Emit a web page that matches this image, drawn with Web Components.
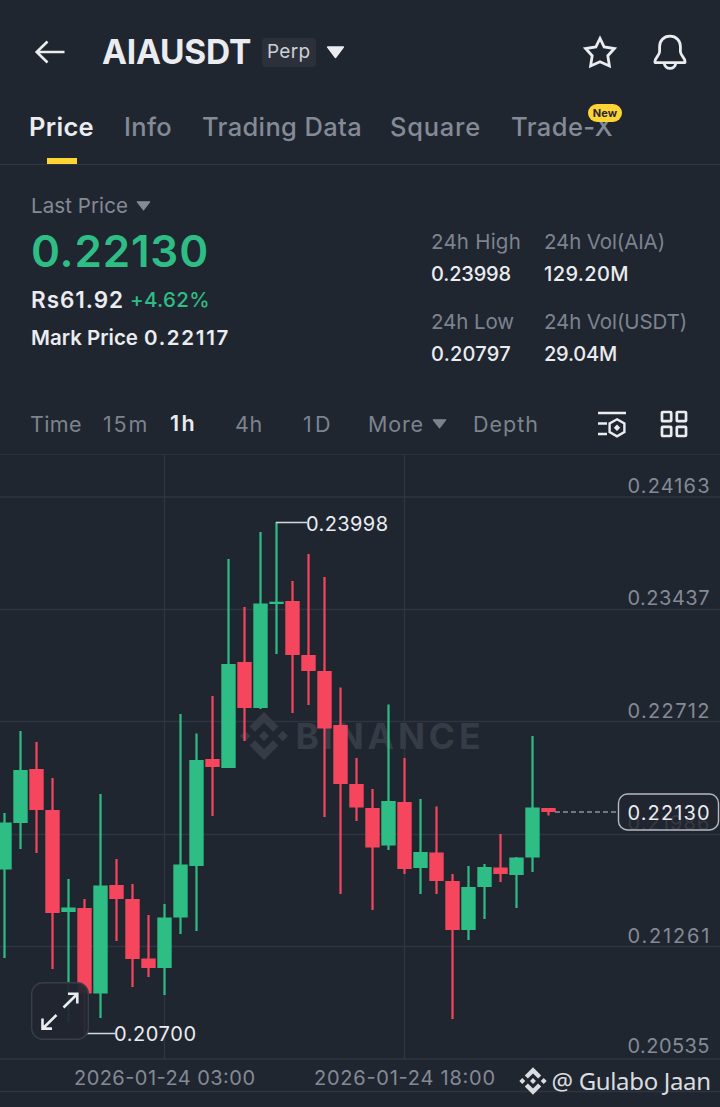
<!DOCTYPE html>
<html lang="en">
<head>
<meta charset="utf-8">
<title>AIAUSDT Perp</title>
<style>
  html, body { margin: 0; background: #202630; }
  body { width: 720px; height: 1107px; overflow: hidden; font-family: Inter, "Noto Sans", sans-serif; color: #eaecef; }
</style>
</head>
<body>
<trade-screen></trade-screen>

<script>
const GREEN = '#2ebd85';
const RED = '#f6465d';
const LOGO = 'M0-24 14.4-9.6 9-4.2 0-13.2-9-4.2-14.4-9.6Z M0 24 14.4 9.6 9 4.2 0 13.2-9 4.2-14.4 9.6Z M0-5.2 5.2 0 0 5.2-5.2 0Z M-18.8-5.2-13.6 0-18.8 5.2-24 0Z M18.8-5.2 24 0 18.8 5.2 13.6 0Z';

// One line of text, tracked so that it fills the given width
class FitText extends HTMLElement {
  constructor() {
    super();
    this.attachShadow({ mode: 'open' });
  }

  connectedCallback() {
    const w = Number(this.getAttribute('w'));
    const size = this.getAttribute('size') || 20.5;
    const weight = this.getAttribute('weight') || 400;
    this.shadowRoot.innerHTML = `
      <style>
        :host { display: flex; flex: none; width: ${w}px; height: 32px; white-space: nowrap; }
        span { flex: none; font-size: ${size}px; font-weight: ${weight}; line-height: 32px; }
      </style>
      <span><slot></slot></span>`;
    const span = this.shadowRoot.querySelector('span');
    const natural = span.getBoundingClientRect().width;
    span.style.letterSpacing = (w - natural) / this.textContent.length + 'px';
  }
}

class CaretDown extends HTMLElement {
  constructor() {
    super();
    this.attachShadow({ mode: 'open' });
  }

  connectedCallback() {
    const w = this.getAttribute('w') || 15;
    const h = this.getAttribute('h') || 10;
    this.shadowRoot.innerHTML = `
      <style>:host { display: block; flex: none; } svg { display: block; }</style>
      <svg width="${w}" height="${h}" viewBox="0 0 15 10" preserveAspectRatio="none">
        <path d="M1.3 .8H13.7L7.5 8.8Z" fill="currentColor" stroke="currentColor" stroke-width="1.2" stroke-linejoin="round"/>
      </svg>`;
  }
}

class PairHeader extends HTMLElement {
  constructor() {
    super();
    this.attachShadow({ mode: 'open' }).innerHTML = `
      <style>
        :host { display: flex; align-items: center; height: 104px; padding: 0 33.5px 0 34px; box-sizing: border-box; color: #eaecef; }
        svg { display: block; flex: none; }
        .title { margin-left: 36px; }
        .badge { margin-left: 11px; width: 54px; height: 29px; box-sizing: border-box; padding-left: 5px; border-radius: 4px;
          background: #2b303b; color: #cdd0d5; display: flex; align-items: center; }
        caret-down { margin-left: 10px; }
        .star { margin-left: auto; margin-right: 35.5px; }
      </style>
      <svg width="32" height="24" viewBox="0 0 32 24" fill="none" stroke="currentColor" stroke-width="2.6">
        <path d="M30.5 12H2.5M13.5 1.5 2.7 12 13.5 22.5"/>
      </svg>
      <fit-text class="title" w="149" size="33.5" weight="700">AIAUSDT</fit-text>
      <div class="badge"><fit-text w="43.5" size="19">Perp</fit-text></div>
      <caret-down w="19" h="13"></caret-down>
      <svg class="star" width="34" height="34" viewBox="0 0 34 34" fill="none" stroke="currentColor" stroke-width="2.8">
        <path d="M17 3.4 21.2 12 31.4 13.5 24.8 20.8 26.4 31 17 26.8 7.6 31 9.2 20.8 2.6 13.5 12.8 12Z"/>
      </svg>
      <svg width="34" height="36" viewBox="0 0 34 36" fill="none" stroke="currentColor" stroke-width="2.8" stroke-linejoin="round">
        <path d="M17 2.2C10.6 2.2 6.6 6.8 6.6 12.6V17.5C6.6 21.5 2 24 2 27.2V28.6H32V27.2C32 24 27.4 21.5 27.4 17.5V12.6C27.4 6.8 23.4 2.2 17 2.2Z"/>
        <path d="M11.3 29.5C12 36 22 36 22.7 29.5"/>
      </svg>`;
  }
}

class PageTabs extends HTMLElement {
  constructor() {
    super();
    this.attachShadow({ mode: 'open' }).innerHTML = `
      <style>
        :host { display: flex; gap: 30px; height: 61px; box-sizing: border-box; padding: 7px 0 0 29px; border-bottom: 1px solid #323843; color: #848a96; }
        .on { color: #eaecef; display: flex; flex-direction: column; justify-content: space-between; align-items: center; }
        .on i { width: 30px; height: 6px; background: #fcd535; }
        .square { margin-left: -2px; }
        .tradex { position: relative; }
        .new { position: absolute; left: 77px; top: -7px; width: 34px; height: 18px; border-radius: 9px; background: #fcd535; color: #2b2731;
          font: 700 11px/18px Inter, sans-serif; text-align: center; letter-spacing: .2px; }
      </style>
      <div class="on"><fit-text w="65" size="25.5" weight="600">Price</fit-text><i></i></div>
      <fit-text w="48" size="25.5" weight="500">Info</fit-text>
      <fit-text w="160" size="25.5" weight="500">Trading Data</fit-text>
      <fit-text class="square" w="91" size="25.5" weight="500">Square</fit-text>
      <div class="tradex"><fit-text w="102" size="25.5" weight="500">Trade-X</fit-text><div class="new">New</div></div>`;
  }
}

class StatCell extends HTMLElement {
  constructor() {
    super();
    this.attachShadow({ mode: 'open' });
  }

  connectedCallback() {
    this.shadowRoot.innerHTML = `
      <style>
        :host { display: block; color: #eaecef; }
        .label { color: #7d838e; }
      </style>
      <fit-text class="label" w="${this.getAttribute('lw')}">${this.getAttribute('label')}</fit-text>
      <fit-text w="${this.getAttribute('vw')}" size="20" weight="500">${this.getAttribute('value')}</fit-text>`;
  }
}

class PriceSummary extends HTMLElement {
  constructor() {
    super();
    this.attachShadow({ mode: 'open' }).innerHTML = `
      <style>
        :host { display: flex; justify-content: space-between; height: 229px; box-sizing: border-box; padding: 25px 32px 0 31px; }
        .row { display: flex; align-items: center; height: 32px; }
        .last { color: #848a96; gap: 8px; }
        .big { color: ${GREEN}; height: 58px; }
        .fiat { gap: 6px; height: 40px; }
        .up { color: ${GREEN}; }
        .mark { gap: 6px; height: 36px; }
        .stats { display: grid; grid-template-columns: 113px 144px; row-gap: 16px; align-content: start; padding-top: 36px; }
      </style>
      <div>
        <div class="row last"><fit-text w="97">Last Price</fit-text><caret-down></caret-down></div>
        <div class="row big"><fit-text w="178" size="44" weight="600">0.22130</fit-text></div>
        <div class="row fiat">
          <fit-text w="93" size="22.5" weight="600">Rs61.92</fit-text>
          <fit-text class="up" w="80" size="20.5" weight="500">+4.62%</fit-text>
        </div>
        <div class="row mark">
          <fit-text w="107" size="20.5" weight="600">Mark Price</fit-text>
          <fit-text w="86" size="20.5" weight="600">0.22117</fit-text>
        </div>
      </div>
      <div class="stats">
        <stat-cell label="24h High" lw="90" value="0.23998" vw="80"></stat-cell>
        <stat-cell label="24h Vol(AIA)" lw="121" value="129.20M" vw="85"></stat-cell>
        <stat-cell label="24h Low" lw="83" value="0.20797" vw="80"></stat-cell>
        <stat-cell label="24h Vol(USDT)" lw="143" value="29.04M" vw="73"></stat-cell>
      </div>`;
  }
}

class IntervalBar extends HTMLElement {
  constructor() {
    super();
    this.attachShadow({ mode: 'open' }).innerHTML = `
      <style>
        :host { display: flex; align-items: center; height: 60px; padding: 0 32px 0 30px; box-sizing: border-box; color: #7d838e; }
        .gap { margin-left: 21px; }
        .on { color: #eaecef; margin: 0 38px 2px 21px; }
        .wide { margin-left: 40px; }
        .more { margin: 0 8px 0 34px; }
        .depth { margin-left: 26px; }
        svg { display: block; color: #eaecef; }
        .gear { margin-left: auto; margin-right: 33px; }
      </style>
      <fit-text w="52" size="21.5">Time</fit-text>
      <fit-text class="gap" w="46" size="21.5">15m</fit-text>
      <fit-text class="on" w="27" size="21.5" weight="600">1h</fit-text>
      <fit-text w="28" size="21.5">4h</fit-text>
      <fit-text class="wide" w="31" size="21.5">1D</fit-text>
      <fit-text class="more" w="56" size="21.5">More</fit-text>
      <caret-down></caret-down>
      <fit-text class="depth" w="66" size="21.5">Depth</fit-text>
      <svg class="gear" width="30" height="28" viewBox="0 0 30 28" fill="none" stroke="currentColor" stroke-width="2.4">
        <path d="M1 3H29M1 13.5H10M1 24H10"/>
        <path d="M20 9.3 27.4 13.5V22.1L20 26.4 12.6 22.1V13.5Z"/>
        <path d="M20 14.6 23.2 17.8 20 21 16.8 17.8Z" fill="currentColor" stroke="none"/>
      </svg>
      <svg width="28" height="28" viewBox="0 0 28 28" fill="none" stroke="currentColor" stroke-width="2.7">
        <rect x="2" y="2" width="9.2" height="9.2" rx=".8"/><rect x="16.8" y="2" width="9.2" height="9.2" rx=".8"/>
        <rect x="2" y="16.8" width="9.2" height="9.2" rx=".8"/><rect x="16.8" y="16.8" width="9.2" height="9.2" rx=".8"/>
      </svg>`;
  }
}

// [up, body top, body bottom, high, low], one candle every 16px
const CANDLES = [
  [1, 822.5, 869.5, 813, 958], [1, 770, 823, 731, 849], [0, 769, 810, 742, 853], [0, 810, 913, 778, 969],
  [1, 907.5, 912, 879, 1022], [0, 908, 993.5, 899, 1034], [1, 885.5, 993.5, 794, 1018], [0, 885, 899, 859, 941],
  [0, 899, 959, 884, 987], [0, 958.5, 968, 915, 977], [1, 917.5, 968, 904, 995], [1, 864.5, 917.5, 714, 934],
  [1, 760, 866, 733.5, 931], [0, 759, 767, 696, 816], [1, 664, 768, 559, 768], [0, 662, 708, 607, 741],
  [1, 603.5, 708, 532, 709], [1, 601.7, 604, 522, 654], [0, 601, 655, 581, 713], [0, 655, 671, 554, 705],
  [0, 671, 728.5, 577, 817], [0, 725, 784, 687.5, 894], [0, 784, 807.5, 758, 821], [0, 808, 847.5, 789, 910],
  [1, 801, 845.5, 704.5, 850], [0, 802, 869, 758, 874], [1, 852, 868, 799, 894], [0, 852.5, 881, 806.5, 894],
  [0, 881, 930, 874, 1019], [1, 887, 930, 866, 940], [1, 867, 887, 864, 919], [0, 867.5, 874, 834, 882],
  [1, 857.5, 875, 857, 908], [1, 807.5, 857.5, 736, 872], [0, 808, 812, 808, 815.5]
];

class CandleChart extends HTMLElement {
  constructor() {
    super();
    this.attachShadow({ mode: 'open' });
  }

  connectedCallback() {
    const rows = [454, 497, 609.5, 721.5, 834.5, 946.5, 1059, 1091.5];
    const grid = rows.map(y => `<path d="M0 ${y}H720"/>`).join('') + '<path d="M164.5 454V1059M404.5 454V1059"/>';
    const axis = [[493, '0.24163'], [605, '0.23437'], [718, '0.22712'], [830, '0.21986'], [943, '0.21261'], [1053, '0.20535']]
      .map(([y, t]) => `<text x="627.5" y="${y}" textLength="82">${t}</text>`).join('');
    const candles = CANDLES.map(([up, top, bottom, high, low], i) => {
      const x = 4.5 + i * 16;
      return `<g fill="${up ? GREEN : RED}"><rect x="${x - 1.1}" y="${high}" width="2.2" height="${low - high}"/>` +
        `<rect x="${x - 7.2}" y="${top}" width="14.4" height="${bottom - top}"/></g>`;
    }).join('');
    this.shadowRoot.innerHTML = `
      <style>
        :host { display: block; height: 653px; }
        svg { display: block; }
        text { font-family: Inter, sans-serif; font-size: 20px; }
        .mark { font-size: 35.5px; font-weight: 700; }
        .sign { font-family: "Noto Sans", sans-serif; font-size: 24px; }
      </style>
      <svg width="720" height="653" viewBox="0 454 720 653">
        <g stroke="#2f3540" stroke-width="1.3">${grid}</g>
        <g fill="#363c46">
          <path d="${LOGO}" transform="translate(264 736)"/>
          <text class="mark" x="295.5" y="749" textLength="185">BINANCE</text>
        </g>
        <g fill="#848a96">${axis}</g>
        ${candles}
        <path d="M276 522.5H307M87 1033.5H115" stroke="#d5d8dc" stroke-width="1.4"/>
        <g fill="#eaecef">
          <text x="306" y="531" textLength="82">0.23998</text>
          <text x="114" y="1041" textLength="82">0.20700</text>
        </g>
        <path d="M555 812H618" stroke="#8b909a" stroke-width="1.6" stroke-dasharray="5 3"/>
        <rect x="618.5" y="794" width="100" height="36" rx="9" fill="#202630" fill-opacity=".8" stroke="#b5b9c0" stroke-width="1.4"/>
        <text x="627.5" y="820" textLength="82" fill="#eaecef">0.22130</text>
        <rect x="31.7" y="982.7" width="56.6" height="56.6" rx="11" fill="#202630" fill-opacity=".93" stroke="#383e49" stroke-width="1.4"/>
        <g fill="none" stroke="#eaecef" stroke-width="2.6">
          <path d="M63.5 1007.5 77 994.2M68 993.8H77.3V1003.5"/>
          <path d="M56.5 1015 43 1028.3M42.5 1018.5V1028.6H52"/>
        </g>
        <g fill="#848a96">
          <text x="74" y="1085" textLength="181">2026-01-24 03:00</text>
          <text x="314" y="1085" textLength="181">2026-01-24 18:00</text>
        </g>
        <g fill="#dadcdf">
          <path d="${LOGO}" transform="translate(533 1081) scale(.57)"/>
          <text class="sign" x="551.5" y="1089.5" textLength="159.5">@ Gulabo Jaan</text>
        </g>
      </svg>`;
  }
}

class TradeScreen extends HTMLElement {
  constructor() {
    super();
    this.attachShadow({ mode: 'open' }).innerHTML = `
      <style>
        :host { display: flex; flex-direction: column; width: 720px; height: 1107px; background: #202630; }
      </style>
      <pair-header></pair-header>
      <page-tabs></page-tabs>
      <price-summary></price-summary>
      <interval-bar></interval-bar>
      <candle-chart></candle-chart>`;
  }
}

customElements.define('fit-text', FitText);
customElements.define('caret-down', CaretDown);
customElements.define('pair-header', PairHeader);
customElements.define('page-tabs', PageTabs);
customElements.define('stat-cell', StatCell);
customElements.define('price-summary', PriceSummary);
customElements.define('interval-bar', IntervalBar);
customElements.define('candle-chart', CandleChart);
customElements.define('trade-screen', TradeScreen);
</script>
</body>
</html>
